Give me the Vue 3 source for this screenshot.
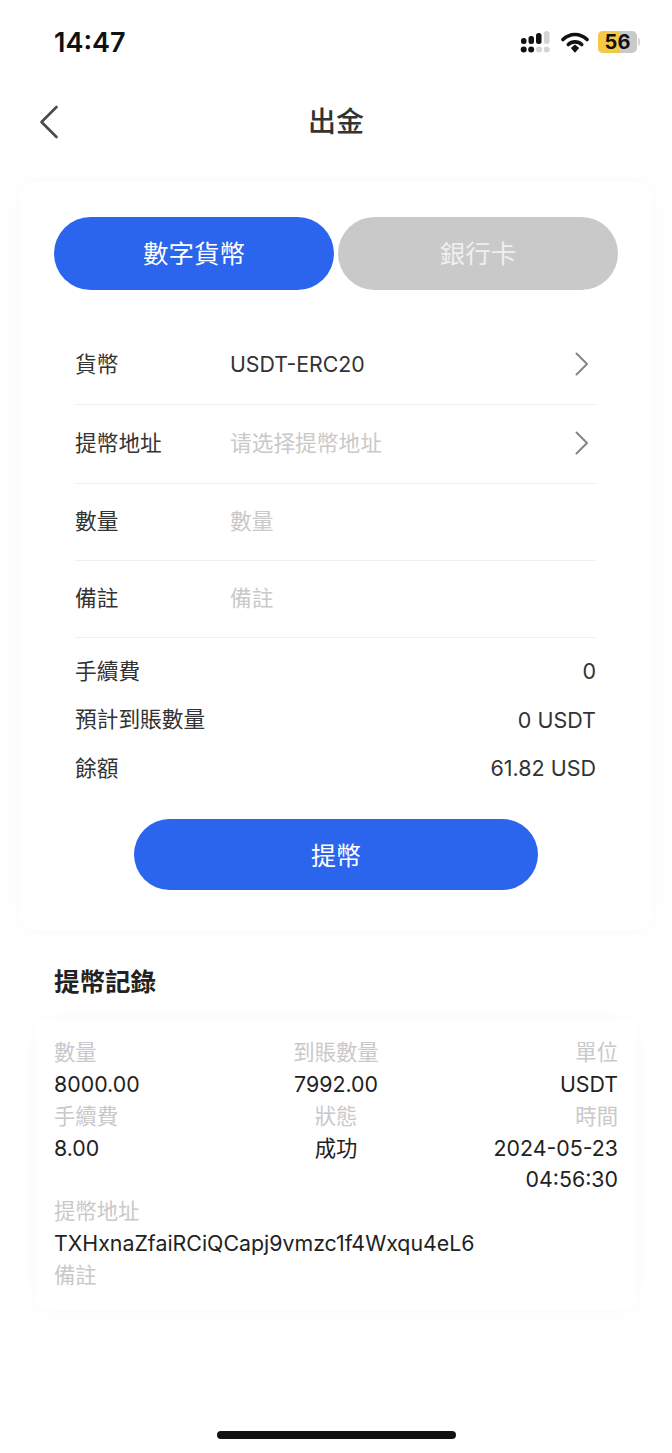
<script setup>
const rows = [
  { label: '貨幣', value: 'USDT-ERC20', filled: true, arrow: true, h: 79 },
  { label: '提幣地址', value: '请选择提幣地址', arrow: true, h: 79 },
  { label: '數量', value: '數量', h: 77 },
  { label: '備註', value: '備註', h: 77 },
]
const summary = [
  { label: '手續費', value: '0' },
  { label: '預計到賬數量', value: '0 USDT' },
  { label: '餘額', value: '61.82 USD' },
]
</script>

<template>
  <div class="page">
    <div class="status">
      <span class="time">14:47</span>
      <div class="status-icons">
        <svg width="32" height="22" viewBox="0 0 32 22">
          <g fill="#111">
            <rect x="1" y="7" width="5.5" height="6" rx="2.5" />
            <rect x="8.5" y="5" width="5.5" height="8" rx="2.5" />
            <rect x="16" y="2" width="5.5" height="11" rx="2.5" />
            <circle cx="3.7" cy="18.5" r="3" />
            <circle cx="11.2" cy="18.5" r="3" />
          </g>
          <g fill="#d4d4d4">
            <rect x="24" y="0" width="5.5" height="13" rx="2.5" />
            <circle cx="19" cy="18.5" r="3" />
            <circle cx="26.7" cy="18.5" r="3" />
          </g>
        </svg>
        <svg class="wifi" width="28" height="24" viewBox="0 0 28 24">
          <path d="M2 9.5C9 2.8 19 2.8 26 9.5" fill="none" stroke="#111" stroke-width="3.6" stroke-linecap="round" />
          <path d="M7.3 14.5C11 11 17 11 20.7 14.5" fill="none" stroke="#111" stroke-width="3.6" stroke-linecap="round" />
          <path d="M9.8 18 14 14.6 18.2 18 14 22.8Z" fill="#111" />
        </svg>
        <div class="battery">
          <div class="battery-fill"></div>
          <span class="battery-num">56</span>
        </div>
        <span class="battery-tip"></span>
      </div>
    </div>

    <header class="nav">
      <svg class="back" width="20" height="34" viewBox="0 0 20 34">
        <path d="M17.5 2 2.5 17l15 15" fill="none" stroke="#4a4a4a" stroke-width="2.6" stroke-linecap="round" stroke-linejoin="round" />
      </svg>
      <h1 class="title">出金</h1>
    </header>

    <section class="card">
      <div class="tabs">
        <button class="tab active">數字貨幣</button>
        <button class="tab">銀行卡</button>
      </div>

      <div class="form">
        <div v-for="r in rows" :key="r.label" class="row" :style="{ height: r.h + 'px' }">
          <span class="label">{{ r.label }}</span>
          <span class="value" :class="{ filled: r.filled }">{{ r.value }}</span>
          <svg v-if="r.arrow" class="chev" width="14" height="24" viewBox="0 0 14 24">
            <path d="M1.5 1.5 12 12 1.5 22.5" fill="none" stroke="#858585" stroke-width="2" stroke-linecap="round" stroke-linejoin="round" />
          </svg>
        </div>

        <div class="summary">
          <div v-for="s in summary" :key="s.label" class="sum-row">
            <span class="sum-label">{{ s.label }}</span>
            <span class="sum-value">{{ s.value }}</span>
          </div>
        </div>
      </div>

      <button class="submit">提幣</button>
    </section>

    <h2 class="rec-title">提幣記錄</h2>

    <section class="record">
      <div class="rec-grid">
        <div class="cell left"><span class="k">數量</span><span class="v">8000.00</span></div>
        <div class="cell center"><span class="k">到賬數量</span><span class="v">7992.00</span></div>
        <div class="cell right"><span class="k">單位</span><span class="v">USDT</span></div>
        <div class="cell left"><span class="k">手續費</span><span class="v">8.00</span></div>
        <div class="cell center"><span class="k">狀態</span><span class="v">成功</span></div>
        <div class="cell right"><span class="k">時間</span><span class="v time-v">2024-05-23 04:56:30</span></div>
      </div>
      <div class="cell left"><span class="k">提幣地址</span><span class="v">TXHxnaZfaiRCiQCapj9vmzc1f4Wxqu4eL6</span></div>
      <div class="cell left"><span class="k">備註</span></div>
    </section>

    <div class="home"></div>
  </div>
</template>

<style>
html, body { margin: 0; background: #fff; }
</style>

<style scoped>
.page {
  position: relative;
  width: 672px;
  height: 1453px;
  overflow: hidden;
  background: #fff;
  font-family: Inter, "Noto Sans CJK TC", sans-serif;
  color: #333;
  box-sizing: border-box;
}
.status {
  height: 84px;
  box-sizing: border-box;
  padding: 26px 32px 0 54px;
  display: flex;
  justify-content: space-between;
  align-items: flex-start;
}
.time {
  font-size: 27px;
  line-height: 33px;
  font-weight: 600;
  color: #111;
}
.status-icons {
  display: flex;
  align-items: center;
  height: 24px;
  margin-top: 4px;
}
.wifi { margin-left: 9px; }
.battery {
  position: relative;
  width: 39px;
  height: 22px;
  margin-left: 9px;
  border-radius: 5px;
  background: #c9c9c9;
  overflow: hidden;
  display: flex;
  align-items: center;
  justify-content: center;
}
.battery-fill {
  position: absolute;
  left: 0;
  top: 0;
  bottom: 0;
  width: 56%;
  background: #f5c945;
}
.battery-num {
  position: relative;
  font-size: 20px;
  font-weight: 700;
  color: #111;
  line-height: 22px;
}
.battery-tip {
  width: 2px;
  height: 8px;
  margin-left: 1px;
  background: #d8d8d8;
  border-radius: 0 2px 2px 0;
}
.nav {
  position: relative;
  height: 76px;
  display: flex;
  align-items: center;
  justify-content: center;
}
.back {
  position: absolute;
  left: 39px;
  top: 21px;
}
.title {
  margin: 0;
  font-size: 28px;
  font-weight: 500;
  line-height: 40px;
  color: #333;
}
.card {
  margin: 22px 20px 0;
  height: 748px;
  box-sizing: border-box;
  padding: 35px 34px 0;
  background: #fff;
  border-radius: 16px;
  box-shadow: 0 0 22px rgba(0, 0, 0, 0.028);
}
.tabs {
  display: flex;
  gap: 4px;
}
.tab {
  flex: 1;
  height: 73px;
  border: 0;
  padding: 0 0 4px;
  border-radius: 37px;
  background: #c9c9c9;
  color: #efefef;
  font: inherit;
  font-size: 25.5px;
}
.tab.active {
  background: #2b65ee;
  color: #fff;
}
.form {
  margin: 36px 22px 0 21px;
}
.row {
  display: flex;
  align-items: center;
  box-sizing: border-box;
  border-bottom: 1px solid #f0f0f0;
  font-size: 21.7px;
}
.label {
  width: 155px;
  color: #333;
  padding-bottom: 6px;
}
.value {
  flex: 1;
  color: #c9c9c9;
  padding-bottom: 6px;
}
.value.filled {
  color: #333;
  font-size: 21.3px;
  padding-bottom: 2px;
}
.chev {
  margin-right: 7px;
  margin-bottom: 2px;
}
.summary {
  padding-top: 8px;
}
.sum-row {
  display: flex;
  justify-content: space-between;
  align-items: center;
  height: 48.5px;
  font-size: 21.7px;
  color: #333;
}
.sum-label { padding-bottom: 2px; }
.sum-value { padding-top: 2px; font-size: 21.5px; }
.submit {
  display: block;
  width: 404px;
  height: 71px;
  margin: 27px auto 0;
  border: 0;
  padding: 0;
  border-radius: 36px;
  background: #2b65ee;
  color: #fff;
  font: inherit;
  font-size: 25px;
}
.rec-title {
  margin: 34px 0 0 54px;
  font-size: 25.5px;
  line-height: 36px;
  font-weight: 700;
  color: #222;
}
.record {
  margin: 20px 36px 0;
  height: 290px;
  box-sizing: border-box;
  padding: 16px 18px 0;
  background: #fff;
  border-radius: 12px;
  box-shadow: 0 0 20px rgba(0, 0, 0, 0.028);
}
.rec-grid {
  display: grid;
  grid-template-columns: 1fr 1fr 1fr;
}
.cell {
  display: flex;
  flex-direction: column;
  font-size: 21.35px;
}
.cell.left { align-items: flex-start; }
.cell.center { align-items: center; }
.cell.right { align-items: flex-end; text-align: right; }
.k { color: #c9c9c9; line-height: 33px; }
.v { color: #222; line-height: 31px; }
.time-v { width: 130px; }
.home {
  position: absolute;
  left: 217px;
  top: 1431px;
  width: 239px;
  height: 8px;
  border-radius: 4px;
  background: #111;
}
</style>
